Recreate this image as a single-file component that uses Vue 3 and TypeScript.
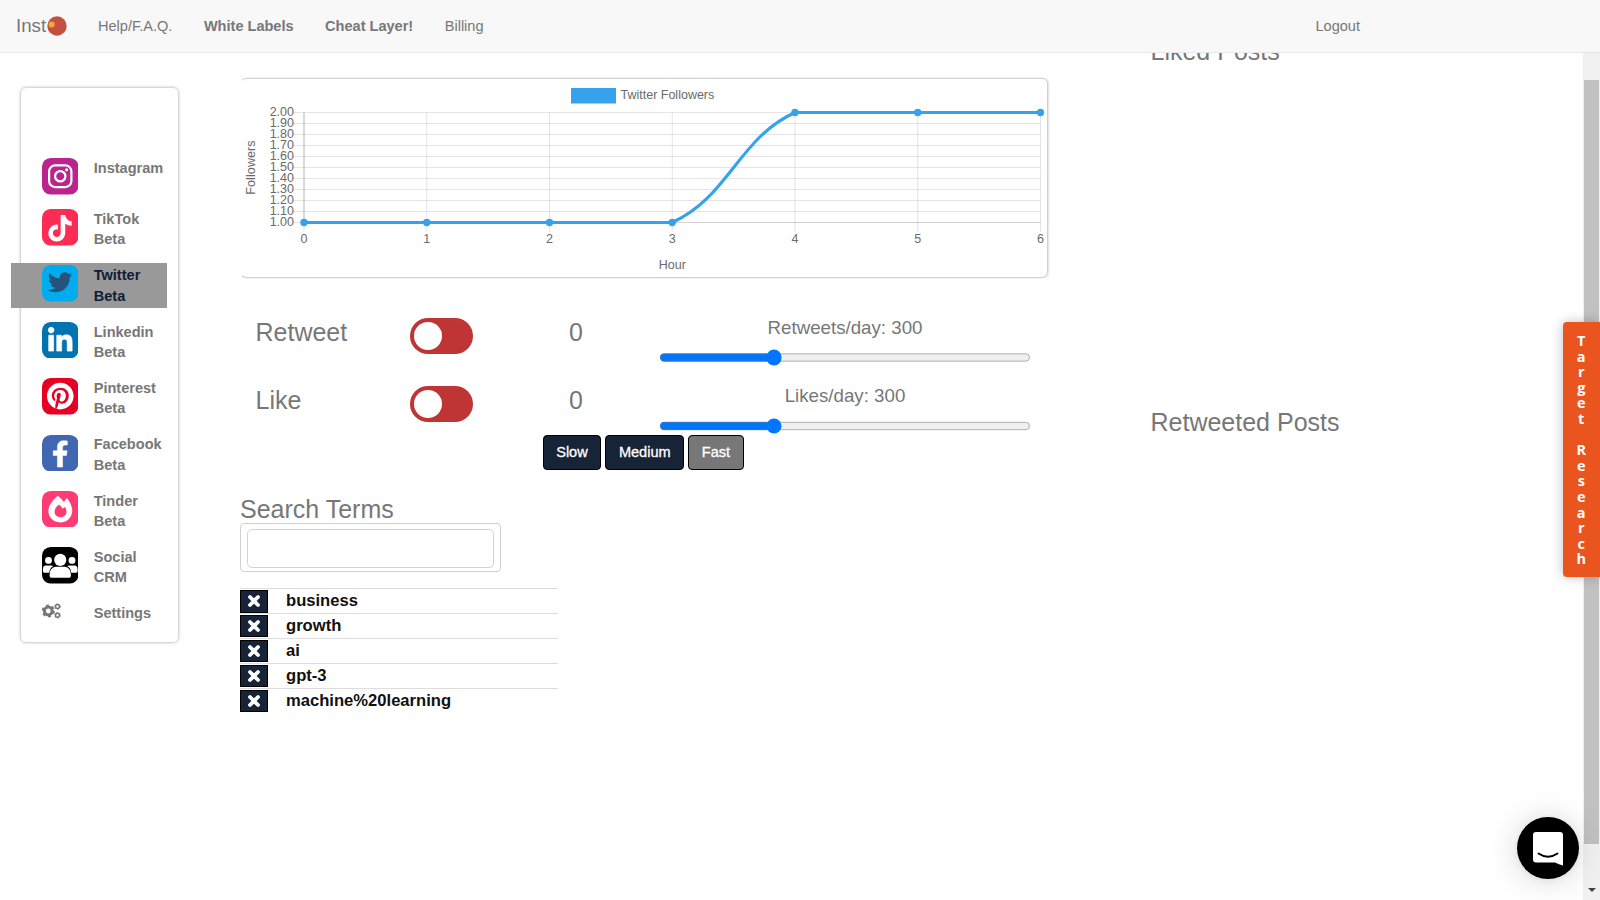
<script setup lang="ts">
import { ref } from 'vue'

interface Shape {
  d: string
  fill?: string
  stroke?: string
  sw?: number
  t?: string
}
interface Network {
  name: string
  sub?: string
  bg: string
  active?: boolean
  shapes: Shape[]
}

const networks: Network[] = [
  {
    name: 'Instagram',
    bg: '#b9258c',
    shapes: [
      { d: 'M13 7.3h10a6 6 0 0 1 6 6v9.4a6 6 0 0 1-6 6H13a6 6 0 0 1-6-6v-9.4a6 6 0 0 1 6-6z', fill: 'none', stroke: '#fff', sw: 2.2 },
      { d: 'M12.9 18a5.1 5.1 0 1 0 10.2 0a5.1 5.1 0 1 0-10.2 0z', fill: 'none', stroke: '#fff', sw: 2.2 },
      { d: 'M22.8 11.7a1.5 1.5 0 1 0 3 0a1.5 1.5 0 1 0-3 0z' },
    ],
  },
  {
    name: 'TikTok',
    sub: 'Beta',
    bg: '#fe2c55',
    shapes: [
      {
        t: 'translate(6.2 5.8) scale(.0515)',
        d: 'M448,209.91a210.06,210.06,0,0,1-122.77-39.25V349.38A162.55,162.55,0,1,1,185,188.31V278.2a74.62,74.62,0,1,0,52.23,71.18V0l88,0a121.18,121.18,0,0,0,1.86,22.17h0A122.18,122.18,0,0,0,381,102.39a121.43,121.43,0,0,0,67,20.14Z',
      },
    ],
  },
  {
    name: 'Twitter',
    sub: 'Beta',
    bg: '#00acee',
    active: true,
    shapes: [
      {
        t: 'translate(5.8 5) scale(.0469)',
        fill: '#26527b',
        d: 'M459.37 151.716c.325 4.548.325 9.097.325 13.645 0 138.72-105.583 298.558-298.558 298.558-59.452 0-114.68-17.219-161.137-47.106 8.447.974 16.568 1.299 25.34 1.299 49.055 0 94.213-16.568 130.274-44.832-46.132-.975-84.792-31.188-98.112-72.772 6.498.974 12.995 1.624 19.818 1.624 9.421 0 18.843-1.3 27.614-3.573-48.081-9.747-84.143-51.98-84.143-102.985v-1.299c13.969 7.797 30.214 12.67 47.431 13.319-28.264-18.843-46.781-51.005-46.781-87.391 0-19.492 5.197-37.36 14.294-52.954 51.655 63.675 129.3 105.258 216.365 109.807-1.624-7.797-2.599-15.918-2.599-24.04 0-57.828 46.782-104.934 104.934-104.934 30.213 0 57.502 12.67 76.67 33.137 23.715-4.548 46.456-13.32 66.599-25.34-7.798 24.366-24.366 44.833-46.132 57.827 21.117-2.273 41.584-8.122 60.426-16.243-14.292 20.791-32.161 39.308-52.628 54.253z',
      },
    ],
  },
  {
    name: 'Linkedin',
    sub: 'Beta',
    bg: '#0073b1',
    shapes: [
      {
        t: 'translate(6.2 5.2) scale(.0525)',
        d: 'M100.28 448H7.4V148.9h92.88zM53.79 108.1C24.09 108.1 0 83.5 0 53.8a53.79 53.79 0 0 1 107.58 0c0 29.7-24.1 54.3-53.79 54.3zM447.9 448h-92.68V302.4c0-34.7-.7-79.2-48.29-79.2-48.29 0-55.69 37.7-55.69 76.7V448h-92.78V148.9h89.08v40.8h1.3c12.4-23.5 42.69-48.3 87.88-48.3 94 0 111.28 61.9 111.28 142.3V448z',
        stroke: '#fff',
        sw: 12,
      },
    ],
  },
  {
    name: 'Pinterest',
    sub: 'Beta',
    bg: '#e60023',
    shapes: [
      {
        t: 'translate(4.9 4.3) scale(.053)',
        d: 'M496 256c0 137-111 248-248 248-25.6 0-50.2-3.9-73.4-11.1 10.1-16.5 25.2-43.5 30.8-65 3-11.6 15.4-59 15.4-59 8.1 15.4 31.7 28.5 56.8 28.5 74.8 0 128.7-68.8 128.7-154.3 0-81.9-66.9-143.2-152.9-143.2-107 0-163.9 71.8-163.9 150.1 0 36.4 19.4 81.7 50.3 96.1 4.7 2.2 7.2 1.2 8.3-3.3.8-3.4 5-20.3 6.9-28.1.6-2.5.3-4.7-1.7-7.1-10.1-12.5-18.3-35.3-18.3-56.6 0-54.7 41.4-107.6 112-107.6 60.9 0 103.6 41.5 103.6 100.9 0 67.1-33.9 113.6-78 113.6-24.3 0-42.6-20.1-36.7-44.8 7-29.5 20.5-61.3 20.5-82.6 0-19-10.2-34.9-31.4-34.9-24.9 0-44.9 25.7-44.9 60.2 0 22 7.4 36.8 7.4 36.8s-24.5 103.8-29 123.2c-5 21.4-3 51.6-.9 71.2C65.4 450.9 0 361.1 0 256 0 119 111 8 248 8s248 111 248 248z',
      },
    ],
  },
  {
    name: 'Facebook',
    sub: 'Beta',
    bg: '#4267b2',
    shapes: [
      {
        t: 'translate(9.9 5.6) scale(.0508)',
        d: 'M279.14 288l14.22-92.66h-88.91v-60.13c0-25.35 12.42-50.06 52.24-50.06h40.42V6.26S260.43 0 225.36 0c-73.22 0-121.08 44.38-121.08 124.72v70.62H22.89V288h81.39v224h100.17V288z',
        stroke: '#fff',
        sw: 10,
      },
    ],
  },
  {
    name: 'Tinder',
    sub: 'Beta',
    bg: '#ff3b73',
    shapes: [
      { d: 'M15.6 4.6C18 6.6 20 8.6 21.6 10.8C22.4 9.4 23.3 8.2 24.6 6.9C27.4 10.5 29.8 15 29.8 19.3C29.8 26 24.8 31 18.2 31C11.3 31 6.3 26.2 6.3 19.6C6.3 14.3 10.4 9 15.6 4.6z' },
      { d: 'M16.6 13.4C18.3 14.7 19.4 16 20.4 17.6L22.6 15.8C23.7 17.3 24.2 18.9 24.2 20.4C24 23.9 21.5 25.8 18.2 25.8C14.9 25.8 12.4 23.600 12.4 20.4C12.4 17.800 14 15.800 16.6 13.4z', fill: '#ff3b73' },
    ],
  },
  {
    name: 'Social',
    sub: 'CRM',
    bg: '#000',
    shapes: [
      { d: 'M12 12.7a6 6 0 1 0 12 0a6 6 0 1 0-12 0z' },
      { d: 'M3 13.2a3.4 3.4 0 1 0 6.8 0a3.4 3.4 0 1 0-6.8 0zM26.2 13.2a3.4 3.4 0 1 0 6.8 0a3.4 3.4 0 1 0-6.8 0z' },
      { d: 'M3.8 18.2h5.4q1 0 1.8.9Q7.400 21 7.200 25.300H2.300q-1.400 0-1.400-1.400v-2q0-3.700 2.900-3.700zM32.200 18.200h-5.400q-1 0-1.800.9q3.600 1.900 3.800 6.200h4.900q1.400 0 1.400-1.400v-2q0-3.700-2.900-3.700z' },
      { d: 'M13.500 19.600h9q5.900 1 6 7.400v1.600q0 1.700-1.700 1.700H9.200q-1.700 0-1.700-1.700V27q.1-6.400 6-7.400z' },
    ],
  },
]

const X0 = 64
const XS = 122.75
const Y0 = 34.5
const YS = 11
const xs = [0, 1, 2, 3, 4, 5, 6]
const ys = xs.concat([7, 8, 9, 10]).map((i) => ({ label: (2 - i / 10).toFixed(2), y: Y0 + i * YS }))
const values = [1, 1, 1, 1, 2, 2, 2]
const px = (i: number) => X0 + i * XS
const py = (v: number) => Y0 + (2 - v) * 110

const actions = ref([
  { name: 'Retweet', count: 0, rate: 'Retweets/day', perDay: 300 },
  { name: 'Like', count: 0, rate: 'Likes/day', perDay: 300 },
])
const speeds = ['Slow', 'Medium', 'Fast']
const speed = ref('Fast')
const draft = ref('')
const terms = ref(['business', 'growth', 'ai', 'gpt-3', 'machine%20learning'])
const tabLetters = 'Target Research'.split('')
</script>

<template>
  <div class="page">
    <nav class="navbar">
      <a class="brand">Inst<svg width="20" height="20" viewBox="0 0 20 20"><circle cx="10" cy="10" r="9.7" fill="#c5503f" /><circle cx="4.700" cy="8.600" r="3" fill="#f3aa2c" /></svg></a>
      <a class="link help">Help/F.A.Q.</a>
      <a class="link"><b>White Labels</b></a>
      <a class="link"><b>Cheat Layer!</b></a>
      <a class="link">Billing</a>
      <a class="link logout">Logout</a>
    </nav>

    <div class="body">
      <aside class="sidebar">
        <div v-for="n in networks" :key="n.name" class="item" :class="{ active: n.active, single: !n.sub }">
          <svg class="ico" viewBox="0 0 36 36">
            <rect width="36" height="36" rx="8.500" :fill="n.bg" />
            <path v-for="(s, i) in n.shapes" :key="i" :d="s.d" :transform="s.t" :fill="s.fill ?? '#fff'" :stroke="s.stroke ?? 'none'" :stroke-width="s.sw ?? 0" />
          </svg>
          <span class="label">{{ n.name }}<template v-if="n.sub"><br />{{ n.sub }}</template></span>
        </div>
        <div class="item settings">
          <svg class="gears" viewBox="0 0 19 16" fill="none" stroke="#777">
            <circle cx="6.300" cy="8" r="3.900" stroke-width="3" />
            <circle cx="6.300" cy="8" r="5.700" stroke-width="1.800" stroke-dasharray="2.900 3.069" />
            <circle cx="15.500" cy="3.600" r="2" stroke-width="1.500" />
            <circle cx="15.500" cy="3.600" r="2.800" stroke-width=".9" stroke-dasharray="1.466 1.466" />
            <circle cx="15.500" cy="12.300" r="2" stroke-width="1.500" />
            <circle cx="15.500" cy="12.300" r="2.800" stroke-width=".9" stroke-dasharray="1.466 1.466" />
          </svg>
          <span class="label">Settings</span>
        </div>
      </aside>

      <main class="main">
        <section class="chart">
          <svg width="808" height="198" viewBox="0 0 808 198">
            <rect x="331" y="10" width="45" height="15.500" fill="#36a2eb" />
            <text x="380.500" y="21">Twitter Followers</text>
            <g stroke="#000" stroke-opacity=".1">
              <line v-for="t in ys" :key="t.label" x1="53" :x2="px(6)" :y1="t.y" :y2="t.y" />
              <line v-for="i in xs" :key="i" :x1="px(i)" :x2="px(i)" :y1="Y0" y2="154" />
              <line :x1="px(0)" :x2="px(0)" :y1="Y0" y2="144" stroke-opacity=".2" />
              <line :x1="px(0)" :x2="px(6)" y1="144.500" y2="144.500" stroke-opacity=".08" />
            </g>
            <text v-for="t in ys" :key="'y' + t.label" x="54" :y="t.y + 3.700" text-anchor="end">{{ t.label }}</text>
            <text v-for="i in xs" :key="'x' + i" :x="px(i)" y="165.300" text-anchor="middle">{{ i }}</text>
            <text :x="px(3)" y="191" text-anchor="middle">Hour</text>
            <text class="axis" transform="translate(15 89.500) rotate(-90)" text-anchor="middle">Followers</text>
            <path d="M64 144.500H432.250C488.400 119.300 498.900 59.700 555 34.500H800.500" fill="none" stroke="#36a2eb" stroke-width="3.100" />
            <circle v-for="(v, i) in values" :key="'p' + i" :cx="px(i)" :cy="py(v)" r="3.700" fill="#36a2eb" />
          </svg>
        </section>

        <section class="actions">
          <div v-for="a in actions" :key="a.name" class="action">
            <span class="name">{{ a.name }}</span>
            <span class="toggle"><i></i></span>
            <span class="count">{{ a.count }}</span>
            <div class="rate">
              <span>{{ a.rate }}: {{ a.perDay }}</span>
              <input v-model.number="a.perDay" type="range" min="0" max="1000" />
            </div>
          </div>
        </section>

        <div class="speeds">
          <button v-for="s in speeds" :key="s" :class="{ on: s === speed }" @click="speed = s">{{ s }}</button>
        </div>

        <section class="search">
          <h3>Search Terms</h3>
          <div class="box"><input v-model="draft" type="text" /></div>
          <ul>
            <li v-for="(t, i) in terms" :key="t">
              <button @click="terms.splice(i, 1)">
                <svg width="14" height="14" viewBox="0 0 14 14" stroke="#fff" stroke-width="3.800" stroke-linecap="round"><path d="M3 3L11 11M11 3L3 11" /></svg>
              </button>
              <b>{{ t }}</b>
            </li>
          </ul>
        </section>
      </main>

      <aside class="posts">
        <h3>Liked Posts</h3>
        <h3>Retweeted Posts</h3>
      </aside>
    </div>

    <div class="scrollbar"><div class="thumb"></div><div class="arrow"></div></div>
    <div class="tab"><span v-for="(c, i) in tabLetters" :key="i">{{ c }}</span></div>
    <div class="chat">
      <svg width="62" height="62" viewBox="0 0 62 62">
        <path d="M19 15h24q3 0 3 3v30.500q-4-.8-8-3H19q-3 0-3-3V18q0-3 3-3z" fill="#fff" />
        <path d="M21.500 36.500q9.500 6.500 19 0" fill="none" stroke="#000" stroke-width="2" stroke-linecap="round" />
      </svg>
    </div>
  </div>
</template>

<style>
html,
body {
  margin: 0;
  overflow: hidden;
}
</style>

<style scoped>
.page {
  position: relative;
  width: 1600px;
  height: 900px;
  overflow: hidden;
  background: #fff;
  color: #777;
  font-family: 'Liberation Sans', Arial, sans-serif;
  font-size: 14.56px;
}
.page * {
  box-sizing: border-box;
}
.navbar {
  position: absolute;
  z-index: 2;
  top: 0;
  left: 0;
  width: 1600px;
  height: 53px;
  display: flex;
  align-items: center;
  padding: 0 240px 1px 16px;
  background: #f8f8f8;
  border-bottom: 1px solid #e7e7e7;
}
.brand {
  display: flex;
  align-items: center;
  font-size: 18.7px;
  width: 82px;
}
.brand svg {
  margin-left: 0.5px;
}
.link {
  margin-right: 31.5px;
}
.logout {
  margin: 0 0 0 auto;
}
.body {
  display: flex;
  align-items: flex-start;
  height: 900px;
}
.sidebar {
  width: 159px;
  height: 556px;
  margin: 87px 0 0 20px;
  padding-top: 68px;
  border: 1px solid #d8d8d8;
  border-radius: 6px;
  box-shadow: 0 0 3px rgba(0, 0, 0, 0.2);
}
.item {
  display: flex;
  align-items: flex-start;
  width: 156px;
  height: 45.5px;
  margin: 0 0 10.85px -10px;
  padding: 2.2px 0 0 31px;
}
.single {
  height: 39.8px;
}
.single .label {
  margin-top: -0.5px;
}
.active {
  background: #999;
  color: #101c36;
}
.ico {
  width: 36.5px;
  height: 36.5px;
  margin: 0.3px 15.5px 0 -0.3px;
  flex: none;
}
.label {
  font-weight: bold;
  line-height: 20.6px;
}
.settings {
  padding-top: 1.5px;
}
.gears {
  width: 19px;
  height: 16px;
  margin: 0 33px 0 -0.3px;
}
.main {
  width: 808px;
  margin: 78px 0 0 61px;
}
.chart {
  width: 808px;
  height: 200px;
  border: 1px solid #d0d0d0;
  border-left-color: transparent;
  border-radius: 6px;
  box-shadow: 1px 0 2px rgba(0, 0, 0, 0.12);
}
.chart svg {
  display: block;
  margin: -1px 0 0 -1px;
}
.chart text {
  font-size: 12.5px;
  fill: #6a6a6a;
}
.chart .axis {
  letter-spacing: 0.1px;
}
.actions {
  margin-top: 36px;
}
.action {
  display: flex;
  height: 68.4px;
  padding-left: 15.5px;
}
.name {
  width: 154px;
  margin-top: 4px;
  font-size: 25px;
  line-height: 28px;
}
.toggle {
  width: 63px;
  height: 36px;
  margin-top: 4px;
  padding: 4px;
  border-radius: 18px;
  background: #bf3434;
}
.toggle i {
  display: block;
  width: 28px;
  height: 28px;
  border-radius: 50%;
  background: #fff;
}
.count {
  width: 14px;
  margin: 4px 0 0 96.5px;
  font-size: 25px;
  line-height: 28px;
}
.rate {
  display: flex;
  flex-direction: column;
  align-items: center;
  width: 371px;
  margin-left: 76.5px;
  padding-top: 2.5px;
  font-size: 18.72px;
  line-height: 22px;
}
.rate input {
  width: 357px;
  height: 16px;
  margin: 10.3px 0 0;
  zoom: 1.04;
}
.speeds {
  display: flex;
  gap: 3.8px;
  margin: -15.4px 0 0 302.5px;
}
.speeds button {
  height: 35px;
  padding: 0 12.7px 2.5px;
  border: 1px solid #000;
  border-radius: 4px;
  background: #172337;
  color: #fff;
  font: 14.56px 'Liberation Sans', Arial, sans-serif;
  -webkit-text-stroke: 0.3px #fff;
}
.speeds .on {
  background: #777;
}
h3 {
  margin: 0;
  font-size: 25px;
  font-weight: normal;
  line-height: 28px;
}
.search {
  margin-top: 25px;
}
.box {
  width: 261px;
  height: 49px;
  padding: 5px 6px;
  border: 1px solid #d0d0d0;
  border-radius: 4px;
}
.box input {
  display: block;
  width: 247px;
  height: 39px;
  border: 1px solid #d4d4d4;
  border-radius: 5px;
  outline: none;
}
ul {
  width: 317.5px;
  margin: 16px 0 0;
  padding: 0;
  list-style: none;
}
li {
  display: flex;
  align-items: center;
  height: 24.9px;
  border-top: 1px solid #ddd;
  color: #111;
  font-size: 16.6px;
}
li button {
  display: flex;
  align-items: center;
  justify-content: center;
  width: 28px;
  height: 22.5px;
  margin-right: 18px;
  padding: 0;
  border: 1px solid #000;
  background: #172337;
}
.posts {
  display: flex;
  flex-direction: column;
  gap: 342.5px;
  margin: 37px 0 0 102.500px;
}
.scrollbar {
  position: absolute;
  top: 53px;
  right: 0;
  width: 17px;
  height: 847px;
  padding: 27px 1.500px 0 1px;
  background: #f1f1f1;
}
.thumb {
  height: 764px;
  background: #c1c1c1;
}
.arrow {
  width: 0;
  margin: 44px 0 0 3.500px;
  border: 4px solid transparent;
  border-top-color: #444;
}
.tab {
  position: absolute;
  top: 322px;
  right: 0;
  display: flex;
  flex-direction: column;
  align-items: center;
  width: 37.5px;
  height: 255px;
  padding-top: 11px;
  border-radius: 4px 0 0 4px;
  background: #e9541f;
  box-shadow: 0 0 12px rgba(0, 0, 0, 0.25);
  color: #fff;
  font: bold 14.5px/15.6px 'Open Sans', 'Noto Sans', sans-serif;
}
.tab span {
  height: 15.6px;
}
.chat {
  position: absolute;
  left: 1517px;
  top: 817px;
  width: 62px;
  height: 62px;
  border-radius: 50%;
  background: #000;
  box-shadow: 0 1px 6px rgba(0, 0, 0, 0.06), 0 2px 32px rgba(0, 0, 0, 0.16);
}
.chat svg {
  display: block;
}
</style>
